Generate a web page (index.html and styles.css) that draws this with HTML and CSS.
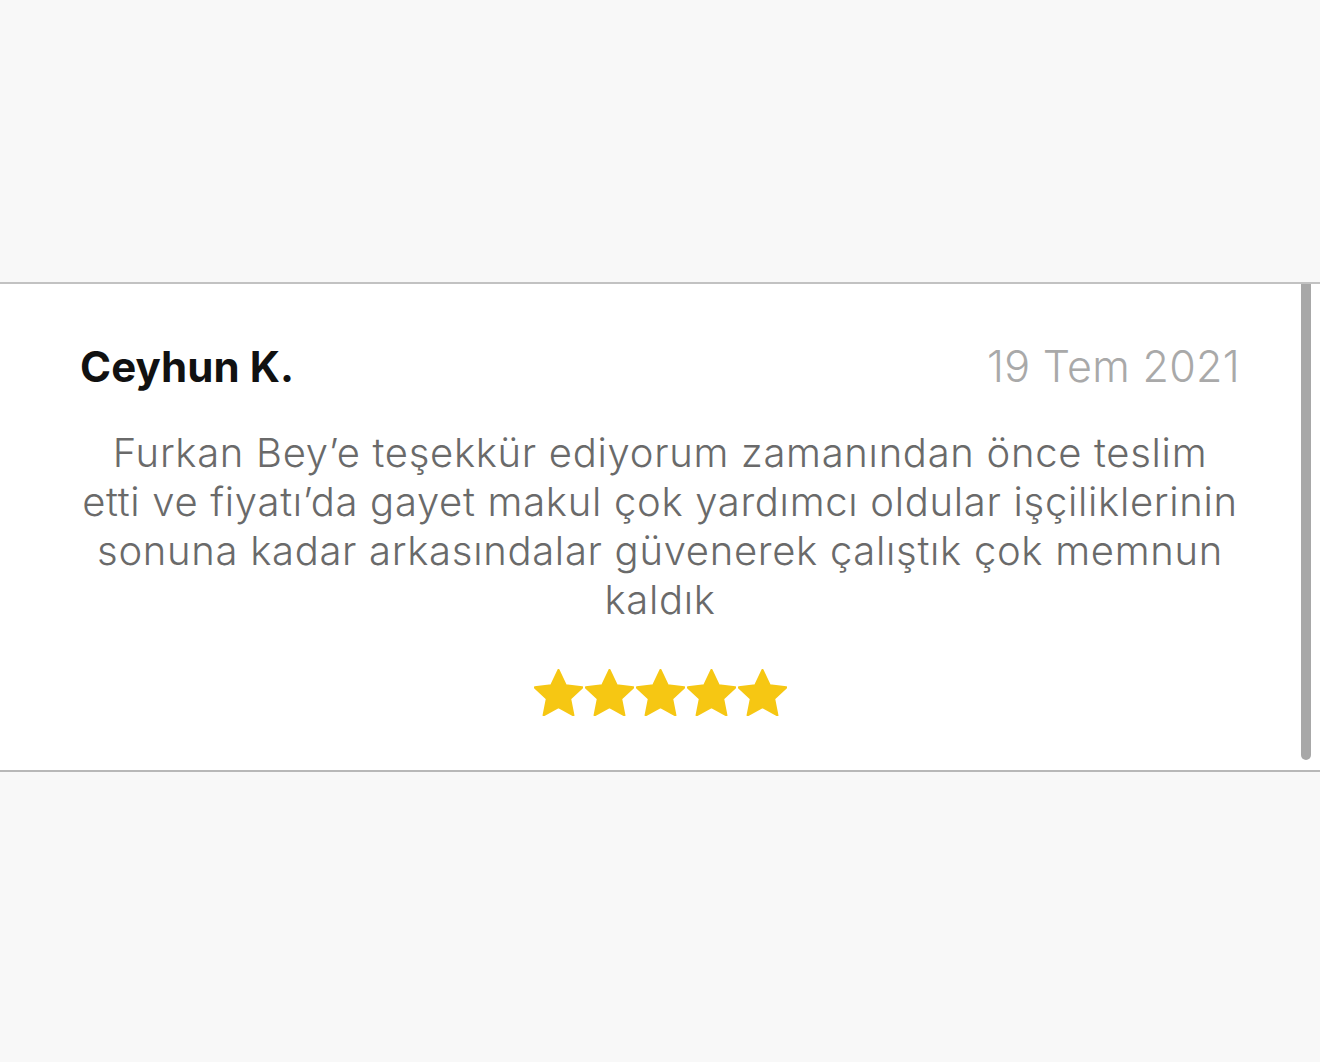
FILE: index.html
```html
<!DOCTYPE html>
<html lang="tr">
<head>
<meta charset="utf-8">
<link rel="stylesheet" href="styles.css">
</head>
<body>
<div class="page">
  <section class="card">
    <div class="card-head">
      <span class="name">Ceyhun K.</span>
      <span class="date">19 Tem 2021</span>
    </div>
    <p class="text">Furkan Bey’e teşekkür ediyorum zamanından önce teslim etti ve fiyatı’da gayet makul çok yardımcı oldular işçiliklerinin sonuna kadar arkasındalar güvenerek çalıştık çok memnun kaldık</p>
    <div class="stars">
      <svg viewBox="1.6 1.4 20.8 20.2"><path d="M12 1.8l3.1 6.6 7.1.9-5.2 4.9 1.4 7.1L12 17.8l-6.4 3.5 1.4-7.1-5.2-4.9 7.1-.9z"/></svg>
      <svg viewBox="1.6 1.4 20.8 20.2"><path d="M12 1.8l3.1 6.6 7.1.9-5.2 4.9 1.4 7.1L12 17.8l-6.4 3.5 1.4-7.1-5.2-4.9 7.1-.9z"/></svg>
      <svg viewBox="1.6 1.4 20.8 20.2"><path d="M12 1.8l3.1 6.6 7.1.9-5.2 4.9 1.4 7.1L12 17.8l-6.4 3.5 1.4-7.1-5.2-4.9 7.1-.9z"/></svg>
      <svg viewBox="1.6 1.4 20.8 20.2"><path d="M12 1.8l3.1 6.6 7.1.9-5.2 4.9 1.4 7.1L12 17.8l-6.4 3.5 1.4-7.1-5.2-4.9 7.1-.9z"/></svg>
      <svg viewBox="1.6 1.4 20.8 20.2"><path d="M12 1.8l3.1 6.6 7.1.9-5.2 4.9 1.4 7.1L12 17.8l-6.4 3.5 1.4-7.1-5.2-4.9 7.1-.9z"/></svg>
    </div>
    <div class="scrollbar"></div>
  </section>
</div>
</body>
</html>
```
FILE: styles.css
```css
html, body {
  margin: 0;
  padding: 0;
  background: #f8f8f8;
}
.page {
  padding-top: 282px;
  height: 1062px;
  box-sizing: border-box;
}
.card {
  position: relative;
  background: #fff;
  border-top: 2px solid #c2c2c2;
  border-bottom: 2px solid #b8b8b8;
  height: 486px;
  padding: 0 80px;
}
.card-head {
  display: flex;
  justify-content: space-between;
  align-items: baseline;
  height: 108px;
  line-height: 1;
}
.name {
  margin-top: 62px;
  font-family: "Inter", sans-serif;
  font-weight: 700;
  font-size: 42px;
  color: #111;
  letter-spacing: 0.1px;
}
.date {
  font-family: "Inter", sans-serif;
  font-weight: 300;
  font-size: 43px;
  color: #a9a9a9;
  letter-spacing: 0.3px;
}
.text {
  margin: 36px 0 0 0;
  font-family: "Inter", sans-serif;
  font-weight: 300;
  font-size: 40px;
  line-height: 49px;
  letter-spacing: 0.7px;
  color: #6a6a6a;
  text-align: center;
}
.stars {
  display: flex;
  justify-content: center;
  gap: 2px;
  margin-top: 45px;
}
.stars svg {
  width: 49px;
  height: 47px;
  fill: #f6c713;
  stroke: #f6c713;
  stroke-width: 0.9;
  stroke-linejoin: round;
}
.scrollbar {
  position: absolute;
  right: 9px;
  top: 0;
  width: 10px;
  height: 476px;
  background: #a8a8a8;
  border-radius: 0 0 5px 5px;
}
```
